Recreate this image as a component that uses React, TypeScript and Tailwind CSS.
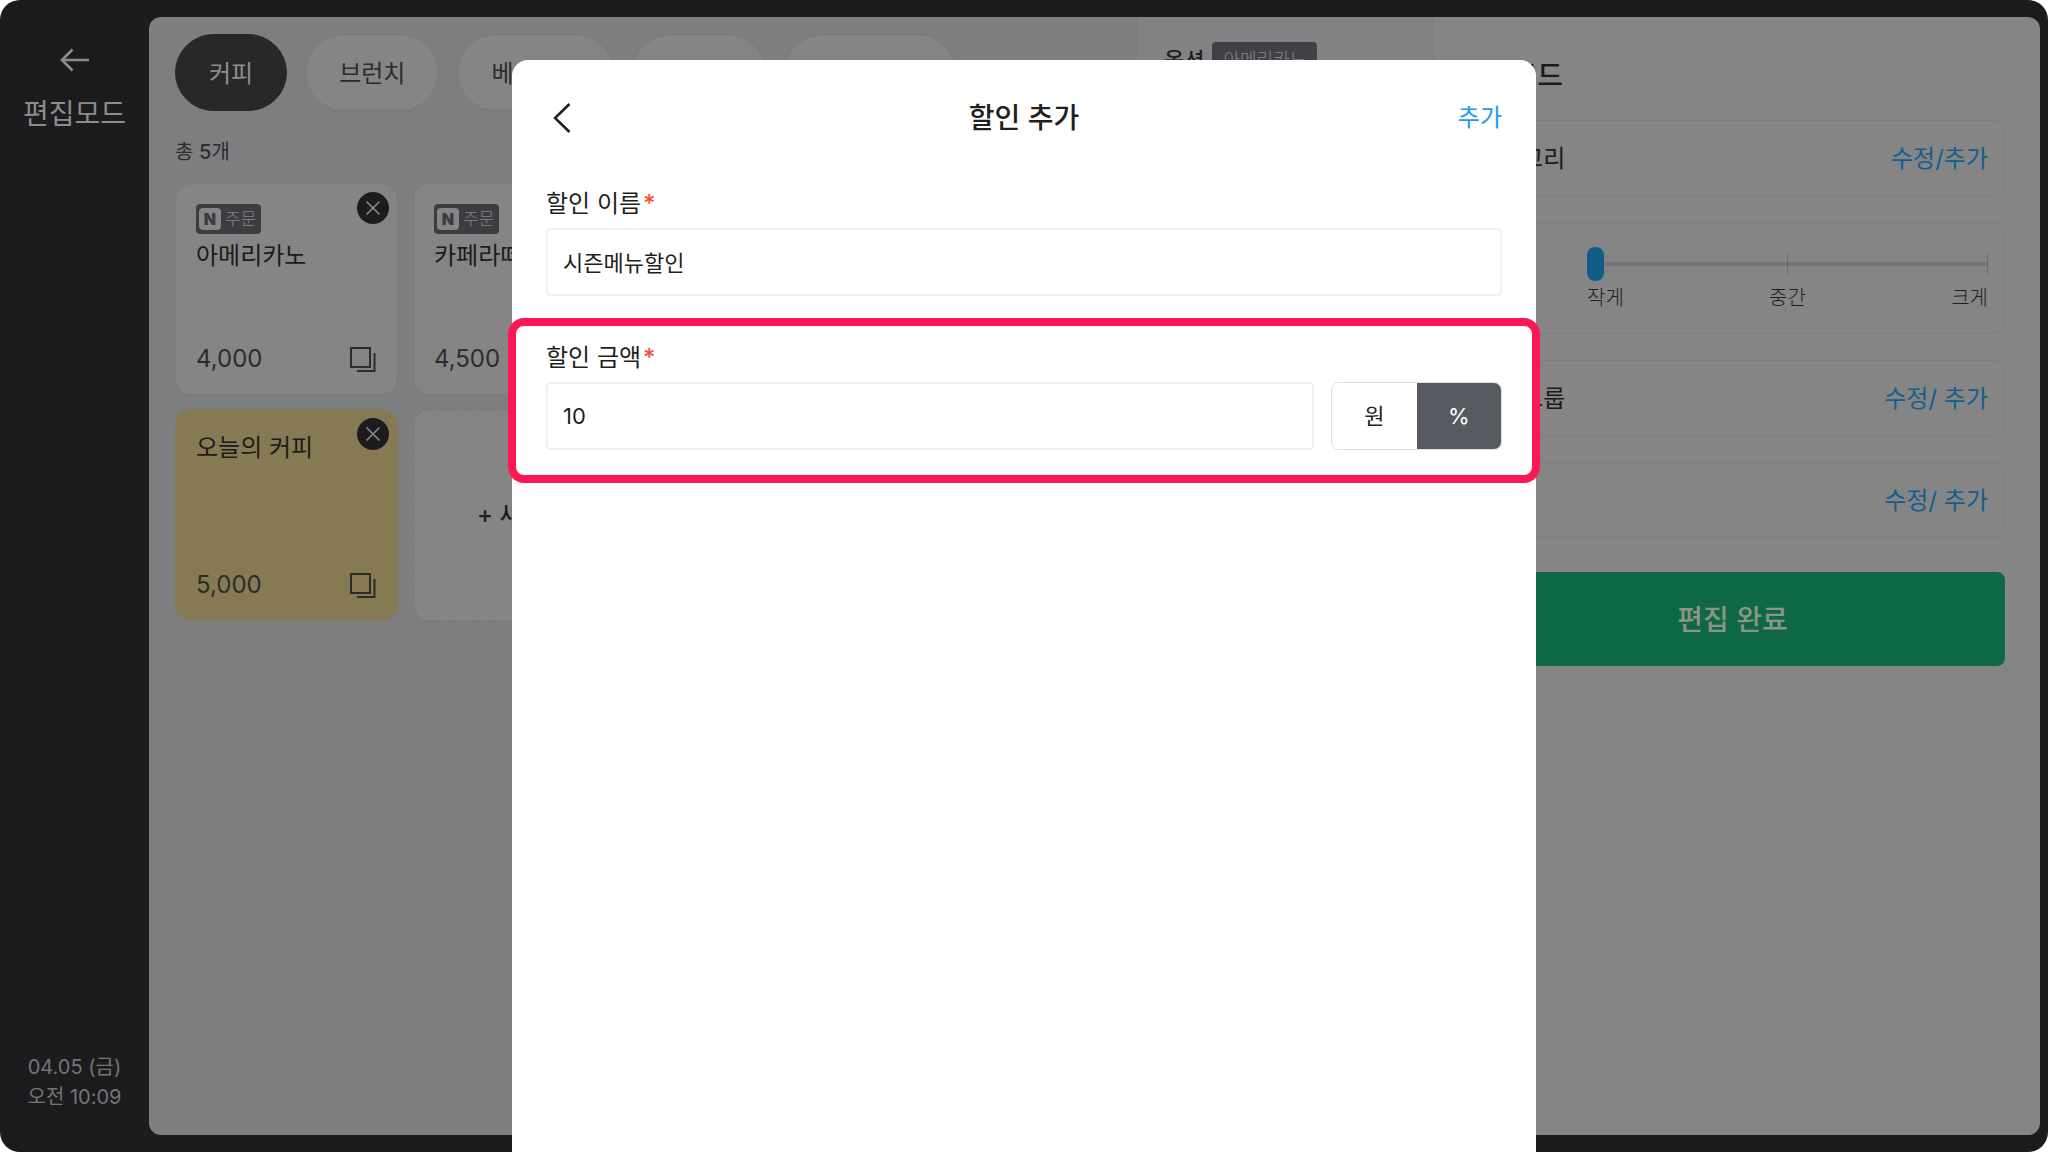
import { useState } from 'react';

const categories = ['커피', '브런치', '베이커리', '디저트', '티&에이드'];

const products = [
  { name: '아메리카노', price: '4,000', order: true, color: 'bg-[#858585] border-[#7b7b7c]' },
  { name: '카페라떼', price: '4,500', order: true, color: 'bg-[#858585] border-[#7b7b7c]' },
  { name: '바닐라라떼', price: '5,000', order: true, color: 'bg-[#858585] border-[#7b7b7c]' },
  { name: '카푸치노', price: '4,500', order: true, color: 'bg-[#858585] border-[#7b7b7c]' },
  { name: '오늘의 커피', price: '5,000', order: false, color: 'bg-[#857a53] border-[#857a53]' },
];

function Sidebar() {
  return (
    <aside className="flex w-[149px] shrink-0 flex-col items-center pt-11 pb-10">
      <button aria-label="뒤로" className="cursor-pointer text-[#8c8c8c]">
        <svg className="h-8 w-8" viewBox="0 0 32 32" fill="none" stroke="currentColor" strokeWidth="2.500">
          <path d="M30 16H3M13.500 5.500L3 16L13.500 26.500" />
        </svg>
      </button>
      <h1 className="mt-[18px] text-[28px] leading-10 text-[#8c8c8c]">편집모드</h1>
      <div className="mt-auto text-center text-xl leading-[30px] text-[#757577]">
        <p>04.05 (금)</p>
        <p>오전 10:09</p>
      </div>
    </aside>
  );
}

function ProductCard({ product }: { product: (typeof products)[number] }) {
  return (
    <li className={`relative flex h-[212px] flex-col rounded-2xl border px-5 pb-[15px] ${product.order ? 'pt-5' : 'pt-4'} ${product.color}`}>
      <button
        aria-label="삭제"
        className="absolute top-2 right-2 flex h-8 w-8 cursor-pointer items-center justify-center rounded-full bg-[#1c1c1e] text-[#8c8c8c]"
      >
        <svg className="h-4 w-4" viewBox="0 0 16 16" fill="none" stroke="currentColor" strokeWidth="1.500">
          <path d="M1.500 1.500L14.500 14.500M14.500 1.500L1.500 14.500" />
        </svg>
      </button>
      {product.order && (
        <div className="flex h-[30px] items-center gap-1 self-start rounded bg-[#3b3d40] pr-[5px] pl-[3px] text-[#858585]">
          <span className="flex h-[22px] w-[22px] items-center justify-center rounded-sm bg-[#858585] text-base leading-none font-black text-[#3b3d40]">
            N
          </span>
          <span className="text-[17px] leading-6 font-light">주문</span>
        </div>
      )}
      <h2 className="mt-1 text-2xl leading-9 text-[#1b1b1c]">{product.name}</h2>
      <div className="mt-auto flex items-center justify-between text-[#2c2c2e]">
        <span className="text-2xl leading-10">{product.price}</span>
        <button aria-label="복사" className="cursor-pointer">
          <svg className="h-7 w-7" viewBox="0 0 28 28" fill="none" stroke="currentColor" strokeWidth="2">
            <path d="M2 3H21V22H2ZM25.500 8V26H8" />
          </svg>
        </button>
      </div>
    </li>
  );
}

function ProductPanel() {
  return (
    <section className="min-w-0 flex-1 bg-[#7d7e80] px-[26px] pt-[17px]">
      <nav className="flex gap-[18px]">
        {categories.map((category, index) => (
          <button
            key={category}
            className={`h-[77px] shrink-0 cursor-pointer rounded-full border px-[33px] pt-0.5 text-2xl whitespace-nowrap ${
              index === 0
                ? 'border-[#27282a] bg-[#27282a] text-[#8f8f8f]'
                : 'border-[#7a7a7b] bg-[#858585] text-[#2c2c2e]'
            }`}
          >
            {category}
          </button>
        ))}
      </nav>
      <p className="mt-[25px] text-xl leading-8 text-[#2c2c2e]">
        총 <span className="font-medium">5</span>개
      </p>
      <ul className="mt-[15px] grid grid-cols-4 gap-x-[15px] gap-y-[14px]">
        {products.map((product) => (
          <ProductCard key={product.name} product={product} />
        ))}
        <li className="flex">
          <button className="flex-1 cursor-pointer rounded-2xl border border-dashed border-[#757576] bg-[#858585] text-2xl font-medium text-[#1f1f20]">
            + 새 상품
          </button>
        </li>
      </ul>
    </section>
  );
}

function OptionPanel() {
  return (
    <section className="w-[295px] shrink-0 bg-[#828284] px-[26px] pt-[25px]">
      <div className="flex items-center gap-2">
        <h2 className="text-[22px] leading-9 font-medium text-[#1f1f20]">옵션</h2>
        <span className="rounded bg-[#3f4145] px-[11px] text-lg leading-9 font-light text-[#858585]">아메리카노</span>
      </div>
    </section>
  );
}

function EditRow({ label, action }: { label: string; action: string }) {
  return (
    <div className="flex h-[76px] items-center justify-between rounded-xl border border-[#7d7d7d] px-4 pt-0.5 text-2xl">
      <span className="text-[#1b1b1c]">{label}</span>
      <button className="cursor-pointer text-[#155d8d]">{action}</button>
    </div>
  );
}

function EditPanel() {
  const [size, setSize] = useState(0);

  return (
    <section className="w-[607px] shrink-0 border-l border-[#7b7b7b] bg-[#858585] pt-[38px] pr-[35px] pl-[26px]">
      <h2 className="text-[28px] leading-[42px] font-medium text-[#1b1b1c]">편집모드</h2>
      <div className="mt-[23px] flex flex-col gap-[26px]">
        <EditRow label="카테고리" action="수정/추가" />
        <div className="flex h-[112px] items-center justify-between rounded-xl border border-[#7d7d7d] px-4 pt-1">
          <label htmlFor="size" className="text-2xl text-[#1b1b1c]">크기</label>
          <div className="w-[401px]">
            {/* track and ticks sit in the same cell as the range input */}
            <div className="grid items-center *:[grid-area:1/1]">
              <div className="h-1 bg-[#757575]"></div>
              <div className="flex h-[22px] justify-between">
                <span className="w-px"></span>
                <span className="w-px bg-[#6c6c6c]"></span>
                <span className="w-px bg-[#6c6c6c]"></span>
              </div>
              <input
                id="size"
                type="range"
                min={0}
                max={2}
                value={size}
                onChange={(e) => setSize(Number(e.target.value))}
                className="h-[34px] w-full cursor-pointer appearance-none bg-transparent [&::-webkit-slider-thumb]:h-[34px] [&::-webkit-slider-thumb]:w-[17px] [&::-webkit-slider-thumb]:appearance-none [&::-webkit-slider-thumb]:rounded-lg [&::-webkit-slider-thumb]:bg-[#135c8a]"
              />
            </div>
            <div className="flex justify-between pt-0.5 text-xl leading-[30px] font-light text-[#1f1f20]">
              <span>작게</span>
              <span>중간</span>
              <span>크게</span>
            </div>
          </div>
        </div>
        <EditRow label="옵션그룹" action="수정/ 추가" />
        <EditRow label="할인" action="수정/ 추가" />
      </div>
      <button className="mt-[34px] h-[94px] w-full cursor-pointer rounded-lg bg-[#0e6846] pt-0.5 text-[28px] font-medium text-[#8a9586]">
        편집 완료
      </button>
    </section>
  );
}

function FieldLabel({ id, text }: { id: string; text: string }) {
  return (
    <label htmlFor={id} className="flex gap-0.5 text-2xl leading-9 text-[#1f1f20]">
      {text}
      <span className="font-medium text-[#f4503c]">*</span>
    </label>
  );
}

function DiscountModal() {
  const [name, setName] = useState('시즌메뉴할인');
  const [amount, setAmount] = useState('10');
  const [unit, setUnit] = useState('%');

  return (
    <div
      role="dialog"
      aria-labelledby="discount-title"
      className="absolute top-[60px] bottom-0 left-1/4 w-1/2 rounded-t-2xl bg-white px-[34px]"
    >
      <header className="grid h-[115px] grid-cols-3 items-center">
        <button aria-label="이전" className="cursor-pointer justify-self-start text-[#1f1f20]">
          <svg className="h-8 w-8" viewBox="0 0 32 32" fill="none" stroke="currentColor" strokeWidth="2.500">
            <path d="M23.500 2L9 16L23.500 30" />
          </svg>
        </button>
        <h2 id="discount-title" className="text-center text-[28px] leading-10 font-medium text-[#1f1f20]">
          할인 추가
        </h2>
        <button className="cursor-pointer justify-self-end text-2xl text-[#1e98f5]">추가</button>
      </header>

      <div className="mt-[11px]">
        <FieldLabel id="name" text="할인 이름" />
        <input
          id="name"
          value={name}
          onChange={(e) => setName(e.target.value)}
          className="mt-[6px] h-[68px] w-full rounded border-2 border-[#f1f1f1] px-[15px] pb-0.5 text-[22px] text-[#1f1f20]"
        />
      </div>

      <div className="-mx-[38px] mt-[22px] rounded-2xl border-8 border-[#ff1654] px-[30px] pt-[14px] pb-[25px]">
        <FieldLabel id="amount" text="할인 금액" />
        <div className="mt-[6px] flex h-[68px] gap-[17px]">
          <input
            id="amount"
            value={amount}
            onChange={(e) => setAmount(e.target.value)}
            className="min-w-0 flex-1 rounded border-2 border-[#f1f1f1] px-[15px] text-[22px] text-[#1f1f20]"
          />
          <div className="flex w-[171px] overflow-hidden rounded-lg border border-[#dfe0e1]">
            {['원', '%'].map((item) => (
              <button
                key={item}
                onClick={() => setUnit(item)}
                className={`flex-1 cursor-pointer text-[22px] ${
                  unit === item ? 'bg-[#565a60] text-white' : 'bg-white text-[#1f1f20]'
                }`}
              >
                {item}
              </button>
            ))}
          </div>
        </div>
      </div>
    </div>
  );
}

export default function App() {
  return (
    <div className="relative flex h-screen overflow-hidden rounded-[20px] bg-[#1c1c1e] pr-2 font-['Inter','Noto_Sans_CJK_KR',sans-serif]">
      <Sidebar />
      <main className="my-[17px] flex min-w-0 flex-1 overflow-hidden rounded-xl">
        <ProductPanel />
        <OptionPanel />
        <EditPanel />
      </main>
      <DiscountModal />
    </div>
  );
}
